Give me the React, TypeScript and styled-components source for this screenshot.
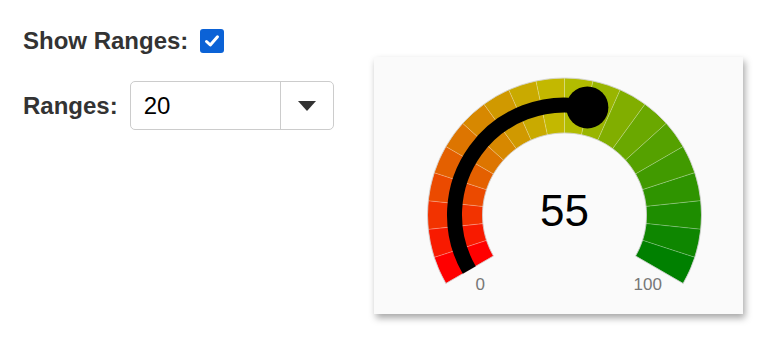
import { createGlobalStyle } from "styled-components";
import styled from "styled-components";

const GlobalStyle = createGlobalStyle`
  html, body {
    margin: 0;
    padding: 0;
    background: #ffffff;
    font-family: "Liberation Sans", Arial, sans-serif;
  }
`;

// gauge geometry
const CX = 190.5;
const CY = 158;
const R_OUT = 137;
const R_IN = 82;
const R_BAR = 110;
const START = -120;
const SWEEP = 240;
const SEGMENTS = 20;
const VALUE = 55;

const pt = (r: number, deg: number) => {
  const a = (deg * Math.PI) / 180;
  return [CX + r * Math.sin(a), CY - r * Math.cos(a)];
};

const bandPath = (a0: number, a1: number) => {
  const [x0, y0] = pt(R_OUT, a0);
  const [x1, y1] = pt(R_OUT, a1);
  const [x2, y2] = pt(R_IN, a1);
  const [x3, y3] = pt(R_IN, a0);
  const large = a1 - a0 > 180 ? 1 : 0;
  return `M${x0} ${y0} A${R_OUT} ${R_OUT} 0 ${large} 1 ${x1} ${y1} L${x2} ${y2} A${R_IN} ${R_IN} 0 ${large} 0 ${x3} ${y3} Z`;
};

const arcPath = (r: number, a0: number, a1: number) => {
  const [x0, y0] = pt(r, a0);
  const [x1, y1] = pt(r, a1);
  const large = a1 - a0 > 180 ? 1 : 0;
  return `M${x0} ${y0} A${r} ${r} 0 ${large} 1 ${x1} ${y1}`;
};

const segColor = (i: number) => {
  const t = i / (SEGMENTS - 1);
  return `hsl(${120 * t}, 100%, ${50 - 25 * t}%)`;
};

function Gauge() {
  const step = SWEEP / SEGMENTS;
  const end = START + (SWEEP * VALUE) / 100;
  const [kx, ky] = pt(R_BAR, end);
  const [lx, ly] = pt(R_BAR, START);
  const [rx, ry] = pt(R_BAR, START + SWEEP);

  return (
    <svg width="369" height="257" viewBox="0 0 369 257">
      {Array.from({ length: SEGMENTS }).map((_, i) => (
        <path
          key={i}
          d={bandPath(START + i * step, START + (i + 1) * step)}
          fill={segColor(i)}
          stroke="rgba(255,255,255,0.35)"
          strokeWidth="0.6"
        />
      ))}
      <path d={bandPath(START, START + SWEEP)} fill="none" stroke="#cfcfcf" strokeWidth="0.8" />
      <path d={arcPath(R_BAR, START, end)} fill="none" stroke="#000" strokeWidth="15" />
      <circle cx={kx} cy={ky} r="21" fill="#000" />
      <text
        x={CX}
        y={CY + 11}
        textAnchor="middle"
        fontFamily="'Liberation Sans', Arial, sans-serif"
        fontSize="44"
        fill="#000"
      >
        {VALUE}
      </text>
      <text
        x={lx + 11}
        y={ly + 20}
        textAnchor="middle"
        fontFamily="'Liberation Sans', Arial, sans-serif"
        fontSize="17"
        fill="#777"
      >
        0
      </text>
      <text
        x={rx - 12}
        y={ry + 20}
        textAnchor="middle"
        fontFamily="'Liberation Sans', Arial, sans-serif"
        fontSize="17"
        fill="#777"
      >
        100
      </text>
    </svg>
  );
}

export default function App() {
  return (
    <>
      <GlobalStyle />
      <Page>
        <Controls>
          <Row>
            <Label>Show Ranges:</Label>
            <Checkbox role="checkbox" aria-checked="true">
              <svg width="18" height="18" viewBox="0 0 18 18">
                <path
                  d="M3.5 9.5 L7.3 13 L14.5 4.8"
                  fill="none"
                  stroke="#fff"
                  strokeWidth="3"
                  strokeLinecap="round"
                  strokeLinejoin="round"
                />
              </svg>
            </Checkbox>
          </Row>
          <Row>
            <Label>Ranges:</Label>
            <Select>
              <SelectValue>20</SelectValue>
              <SelectArrow>
                <svg width="18" height="10" viewBox="0 0 18 10">
                  <path d="M0 0 L18 0 L9 10 Z" fill="#333" />
                </svg>
              </SelectArrow>
            </Select>
          </Row>
        </Controls>
        <Card>
          <Gauge />
        </Card>
      </Page>
    </>
  );
}

const Page = styled.div`
  display: flex;
  align-items: flex-start;
  gap: 40px;
  padding-left: 23px;
  padding-bottom: 30px;
`;

const Controls = styled.div`
  display: flex;
  flex-direction: column;
  gap: 28px;
  padding-top: 29px;
  width: 311px;
`;

const Row = styled.div`
  display: flex;
  align-items: center;
  gap: 12px;
`;

const Label = styled.span`
  color: #333333;
  font-size: 24px;
  font-weight: bold;
  line-height: 24px;
`;

const Checkbox = styled.span`
  width: 24px;
  height: 24px;
  border-radius: 3px;
  background: #0b62d6;
  display: flex;
  align-items: center;
  justify-content: center;
`;

const Select = styled.div`
  box-sizing: border-box;
  width: 205px;
  height: 49px;
  border: 1px solid #cccccc;
  border-radius: 5px;
  background: #fff;
  display: flex;
`;

const SelectValue = styled.div`
  flex: 1;
  display: flex;
  align-items: center;
  padding-left: 13px;
  font-size: 24px;
  color: #000;
`;

const SelectArrow = styled.div`
  width: 52px;
  border-left: 1px solid #cccccc;
  display: flex;
  align-items: center;
  justify-content: center;
`;

const Card = styled.div`
  margin-top: 57px;
  width: 369px;
  height: 257px;
  background: #fafafa;
  box-shadow: 2px 4px 7px rgba(0, 0, 0, 0.35);
`;
